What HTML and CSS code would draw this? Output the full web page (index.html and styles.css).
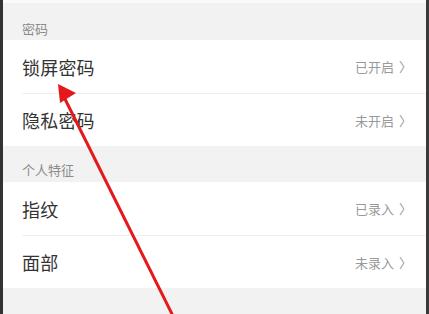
FILE: index.html
```html
<!DOCTYPE html>
<html lang="zh-CN">
<head>
<meta charset="utf-8">
<link rel="stylesheet" href="styles.css">
</head>
<body>
<div class="screen">
  <div class="topstrip"></div>
  <div class="section-title first">密码</div>
  <div class="group">
    <div class="row"><span class="label">锁屏密码</span><span class="value">已开启<span class="chev">〉</span></span></div>
    <div class="row"><span class="label">隐私密码</span><span class="value">未开启<span class="chev">〉</span></span></div>
  </div>
  <div class="section-title">个人特征</div>
  <div class="group">
    <div class="row"><span class="label">指纹</span><span class="value">已录入<span class="chev">〉</span></span></div>
    <div class="row"><span class="label">面部</span><span class="value">未录入<span class="chev">〉</span></span></div>
  </div>
  <div class="bottom"></div>
  <svg class="arrow" width="429" height="314" viewBox="0 0 429 314">
    <line x1="174" y1="318" x2="65" y2="99" stroke="#e3191c" stroke-width="3"/>
    <polygon points="58,84 76,93 60,103" fill="#e3191c"/>
  </svg>
</div>
</body>
</html>
```
FILE: styles.css
```css
html, body {
  margin: 0;
  padding: 0;
}
body {
  width: 429px;
  height: 314px;
  overflow: hidden;
  font-family: "Noto Sans CJK SC", "Noto Sans", sans-serif;
}
.screen {
  position: relative;
  width: 429px;
  height: 314px;
  box-sizing: border-box;
  border-left: 3px solid #333;
  border-right: 3px solid #3a3a3a;
  background: #f2f2f2;
  display: flex;
  flex-direction: column;
}
.topstrip {
  height: 3px;
  background: #fafafa;
  flex: none;
}
.section-title {
  height: 36px;
  box-sizing: border-box;
  padding: 15px 0 0 19px;
  font-size: 13px;
  line-height: 18px;
  color: #8a8a8a;
  flex: none;
}
.section-title.first {
  height: 37px;
  padding-top: 17px;
}
.group {
  background: #fff;
  flex: none;
}
.row {
  height: 53px;
  margin-left: 19px;
  padding-right: 14px;
  display: flex;
  align-items: center;
  justify-content: space-between;
  box-sizing: border-box;
}
.row + .row {
  border-top: 1px solid #efefef;
}
.label {
  font-size: 18px;
  color: #333;
  letter-spacing: 0.2px;
}
.value {
  font-size: 13px;
  color: #999;
  display: flex;
  align-items: center;
}
.chev {
  font-size: 13px;
  margin-left: 5px;
  color: #999;
}
.bottom {
  flex: 1;
}
.arrow {
  position: absolute;
  left: -3px;
  top: 0;
}
```
